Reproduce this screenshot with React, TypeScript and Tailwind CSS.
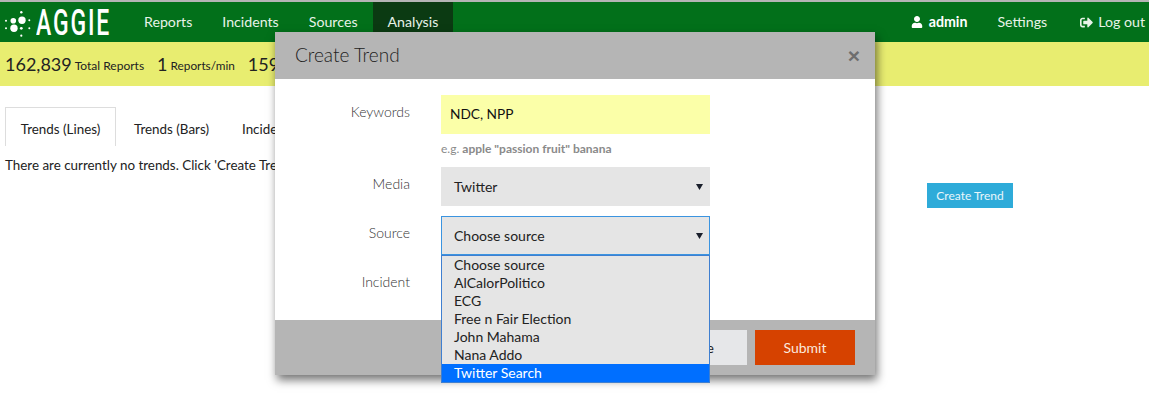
import React from 'react';
import { FaUser, FaSignOutAlt } from 'react-icons/fa';

const navLinks = ['Reports', 'Incidents', 'Sources', 'Analysis'];
const sources = ['Choose source', 'AlCalorPolitico', 'ECG', 'Free n Fair Election', 'John Mahama', 'Nana Addo', 'Twitter Search'];

const Logo = () => (
    <div className="flex items-center w-[129px] pl-[5px] h-full">
        <svg width="27" height="30" viewBox="0 0 27 30" className="shrink-0" fill="#fff">
            <circle cx="16.3" cy="5.3" r="1.2" />
            <circle cx="1" cy="13.7" r="1" />
            <circle cx="1" cy="21.3" r="1" />
            <circle cx="17" cy="13.3" r="3.7" />
            <circle cx="8.3" cy="13.7" r="2.8" />
            <circle cx="9" cy="21.3" r="3.7" />
            <circle cx="16.3" cy="21.3" r="1.4" />
            <circle cx="24.3" cy="13.3" r="1" />
            <circle cx="24.3" cy="21.3" r="1" />
            <circle cx="16.3" cy="28.7" r="1.1" />
        </svg>
        <span className="ml-[4px] inline-block origin-left scale-x-[0.62] font-['Roboto',sans-serif] text-[37px] leading-none font-medium tracking-[3px] text-white">
            AGGIE
        </span>
    </div>
);

const Caret = () => (
    <svg width="7" height="6" viewBox="0 0 7 6" className="shrink-0">
        <polygon points="0,0 7,0 3.5,6" fill="#1a1f2b" />
    </svg>
);

const App = () => {
    return (
        <div className="relative h-[417px] w-[1149px] overflow-hidden bg-white font-['Lato',sans-serif] text-[13.4px] text-[#222]">
            <div className="h-[2px] bg-[#b5b5b5]" />
            <nav className="flex h-[40px] items-stretch bg-[#02701a] text-[14.2px] text-[#e8f3e8]">
                <Logo />
                <div className="flex items-stretch">
                    {navLinks.map(link => (
                        <a key={link} className={`flex items-center px-[15px] ${link === 'Analysis' ? 'bg-[#0b3a12]' : ''}`}>
                            {link}
                        </a>
                    ))}
                </div>
                <div className="ml-auto flex items-center pr-[4px]">
                    <FaUser className="mr-[6px] text-[12px] text-white" />
                    <span className="font-bold text-white">admin</span>
                    <span className="ml-[30px]">Settings</span>
                    <FaSignOutAlt className="ml-[33px] mr-[5px] text-[13px]" />
                    <span>Log out</span>
                </div>
            </nav>
            <div className="flex h-[44px] items-center bg-[#e8ed70] pl-[5px] text-[#222]">
                <span className="text-[18px]">162,839</span>
                <span className="ml-[3px] mt-[4px] text-[12px]">Total Reports</span>
                <span className="ml-[13px] text-[18px]">1</span>
                <span className="ml-[3px] mt-[4px] text-[11.8px]">Reports/min</span>
                <span className="ml-[13px] text-[18px]">159</span>
            </div>

            <div className="flex px-[5px] pt-[21px]">
                <div className="h-[39px] w-[111px] border border-b-0 border-[#ddd] pt-[11px] text-center">Trends (Lines)</div>
                <div className="w-[108px] pt-[12px] pl-[18px]">Trends (Bars)</div>
                <div className="pt-[12px] pl-[18px]">Incidents</div>
            </div>
            <p className="pl-[5px] pt-[9px]">There are currently no trends. Click 'Create Trend' to add one.</p>
            <div className="flex justify-end pr-[136px] pt-[8px]">
                <button className="h-[25px] w-[86px] bg-[#2eabd9] text-[12px] text-[#e8f6fb]">Create Trend</button>
            </div>

            <div className="absolute left-[275px] top-[32px] h-[343px] w-[600px] bg-white shadow-[2px_5px_9px_rgba(0,0,0,0.55)]">
                <div className="flex h-[47px] items-center justify-between bg-[#b5b5b5] pl-[20px] pr-[15px]">
                    <h3 className="text-[19px] font-light text-[#222]">Create Trend</h3>
                    <span className="font-['Liberation_Sans',sans-serif] text-[21px] font-bold leading-none text-[#6e6e6e]">×</span>
                </div>
                <div className="h-[241px] pt-[16px]">
                    <div className="flex">
                        <label className="w-[135px] pt-[6px] text-right text-[14px] font-light text-[#333]">Keywords</label>
                        <div className="ml-[31px] flex h-[39px] w-[269px] items-center bg-[#fbffa8] pl-[9px] text-[13.7px] text-[#111]">NDC, NPP</div>
                    </div>
                    <p className="ml-[166px] mt-[7px] h-[26px] text-[12px] leading-[15px] text-[#8a8a8a]">
                        e.g. <b>apple "passion fruit" banana</b>
                    </p>
                    <div className="flex">
                        <label className="w-[135px] pt-[6px] text-right text-[14px] font-light text-[#333]">Media</label>
                        <div className="ml-[31px] flex h-[39px] w-[269px] items-center justify-between bg-[#e5e5e5] pl-[13px] pr-[7px] text-[14px]">
                            <span>Twitter</span>
                            <Caret />
                        </div>
                    </div>
                    <div className="mt-[10px] flex">
                        <label className="w-[135px] pt-[6px] text-right text-[14px] font-light text-[#333]">Source</label>
                        <div className="ml-[31px] flex h-[39px] w-[269px] items-center justify-between border border-[#3b94e0] bg-[#e5e5e5] pl-[12px] pr-[6px] text-[14px]">
                            <span>Choose source</span>
                            <Caret />
                        </div>
                    </div>
                    <div className="mt-[16px] flex">
                        <label className="w-[135px] text-right text-[14px] font-light text-[#333]">Incident</label>
                    </div>
                </div>
                <div className="flex h-[55px] items-start justify-end bg-[#b5b5b5] pr-[20px] pt-[10px] text-[14px]">
                    <button className="h-[35px] w-[100px] bg-[#e6e7e9] text-[#222]">Close</button>
                    <button className="ml-[8px] h-[35px] w-[100px] bg-[#d64200] text-[#fbe9df]">Submit</button>
                </div>
                <ul className="absolute left-[166px] top-[223px] h-[128px] w-[269px] border border-[#3f7fd0] bg-[#e5e5e5] text-[14px] leading-[18px] text-[#222]">
                    {sources.map(source => (
                        <li key={source} className={`h-[18px] pl-[12px] ${source === 'Twitter Search' ? 'bg-[#006fff] text-white' : ''}`}>
                            {source}
                        </li>
                    ))}
                </ul>
            </div>
        </div>
    );
};

export default App;
